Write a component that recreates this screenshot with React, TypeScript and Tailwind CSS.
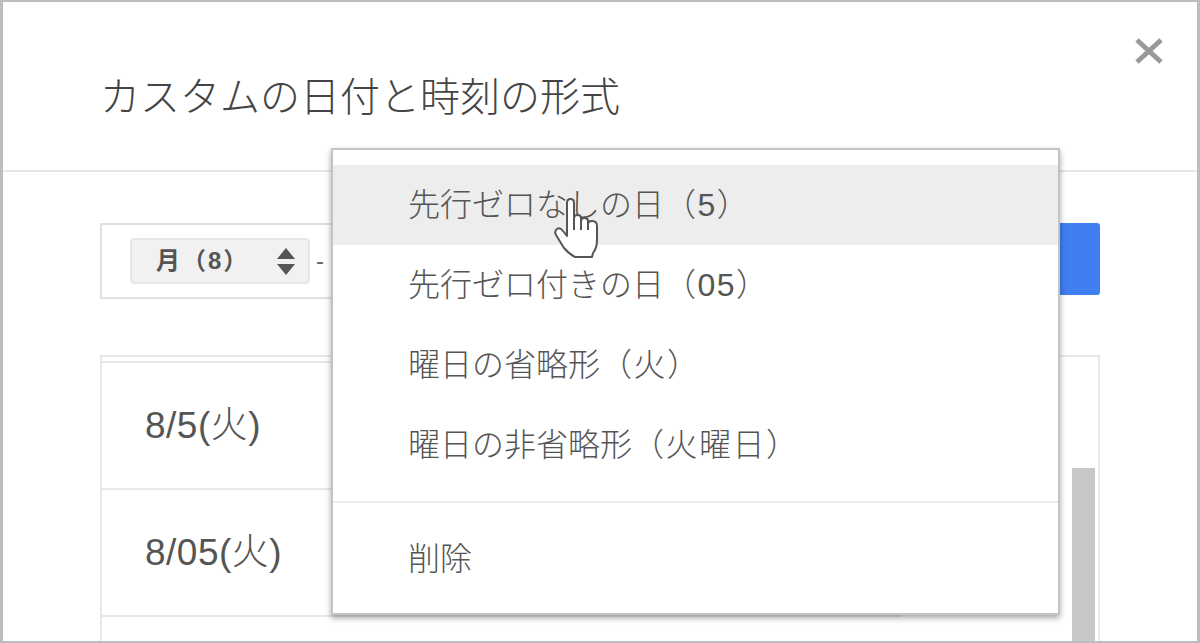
const jp = "font-['Liberation_Sans','Noto_Sans_CJK_JP',sans-serif]";

const menuItems = [
  { label: '先行ゼロなしの日', suffix: '（5）' },
  { label: '先行ゼロ付きの日', suffix: '（05）' },
  { label: '曜日の省略形', suffix: '（火）' },
  { label: '曜日の非省略形', suffix: '（火曜日）' },
];

function HandCursor() {
  return (
    <svg viewBox="0 0 45 60" className="absolute left-[221px] top-[48px] w-[45px] h-[60px]">
      <path
        d="M13 28 L13 5 Q13 1 16.5 1 Q20 1 20 5 L20 20 Q20 17 23.5 17 Q27 17 27 20 L27 23 Q27 20 30.5 20 Q34 20 34 23 L34 26 Q34 23 38 23 Q43 23 43 28 L43 42 Q43 50 39 55 L38 59 L21 59 Q15 56 10 50 L2 37 Q0 33 3 31 Q6 29 9 33 L13 38 Z"
        fill="#fff"
        stroke="#555"
        strokeWidth="2"
        strokeLinejoin="round"
      />
      <path d="M20 20 L20 32 M27 22 L27 32 M34 25 L34 32" fill="none" stroke="#555" strokeWidth="2" />
    </svg>
  );
}

function Dropdown() {
  return (
    <div className="absolute left-[328px] top-[146px] w-[729px] h-[467px] bg-white border-2 border-[#c4c4c4] shadow-[0_3px_6px_rgba(0,0,0,0.35)] py-[15px] font-light">
      {menuItems.map((item, i) => (
        <div
          key={item.label}
          className={`h-[80px] flex items-center pl-[75px] text-[32px] text-[#555] ${i === 0 ? 'bg-[#ededed]' : ''}`}
        >
          <span>{item.label}</span>
          <span className="tracking-[1.5px]">{item.suffix}</span>
        </div>
      ))}
      <div className="my-[16px] h-[2px] bg-[#ececec]" />
      <div className="h-[80px] flex items-center pl-[75px] text-[32px] text-[#555]">削除</div>
      <HandCursor />
    </div>
  );
}

export default function App() {
  return (
    <div className={`relative w-[1200px] h-[643px] overflow-hidden bg-white border-x-[3px] border-y-2 border-[#bdbdbd] ${jp}`}>
      <div className="h-[170px] border-b-2 border-[#e6e6e6] pl-[97px] pt-[69px] relative">
        <h1 className="text-[40px] leading-[52px] font-light text-[#444]">カスタムの日付と時刻の形式</h1>
        <svg viewBox="0 0 30 28" className="absolute left-[1131px] top-[35px] w-[30px] h-[28px]">
          <path d="M3 3 L27 25 M27 3 L3 25" stroke="#999" strokeWidth="5" fill="none" />
        </svg>
      </div>

      <div className="pl-[97px] pr-[97px] pt-[51px] flex justify-between items-start">
        <div className="w-[850px] h-[76px] border-2 border-[#e0e0e0] flex items-center pl-[28px]">
          <div className="w-[180px] h-[46px] bg-[#f1f1f1] border-2 border-[#e6e6e6] rounded-[4px] flex items-center pl-[24px] pr-[12px]">
            <span className="text-[24px] font-bold text-[#555] flex-1 tracking-[2px]">月（8）</span>
            <svg viewBox="0 0 20 30" className="w-[20px] h-[30px]">
              <path d="M10 2 L19 13 L1 13 Z M1 18 L19 18 L10 29 Z" fill="#555" />
            </svg>
          </div>
          <span className="ml-[6px] text-[24px] text-[#666]">-</span>
        </div>
        <div className="w-[120px] h-[72px] bg-[#3f7ff0] rounded-[3px]" />
      </div>

      <div className="mx-[97px] mt-[56px] h-[300px] border-2 border-b-0 border-[#e8e8e8] flex justify-between">
        <div className="w-[800px] border-t-2 border-[#e8e8e8] mt-[4px]">
          <div className="h-[127px] border-b-2 border-[#e8e8e8] flex items-center pl-[43px] text-[37px] font-light text-[#555] tracking-[0.5px]">8/5(火)</div>
          <div className="h-[127px] border-b-2 border-[#e8e8e8] flex items-center pl-[43px] text-[37px] font-light text-[#555] tracking-[0.5px]">8/05(火)</div>
        </div>
        <div className="w-[23px] mr-[3px] mt-[111px] bg-[#c8c8c8]" />
      </div>

      <Dropdown />
    </div>
  );
}
